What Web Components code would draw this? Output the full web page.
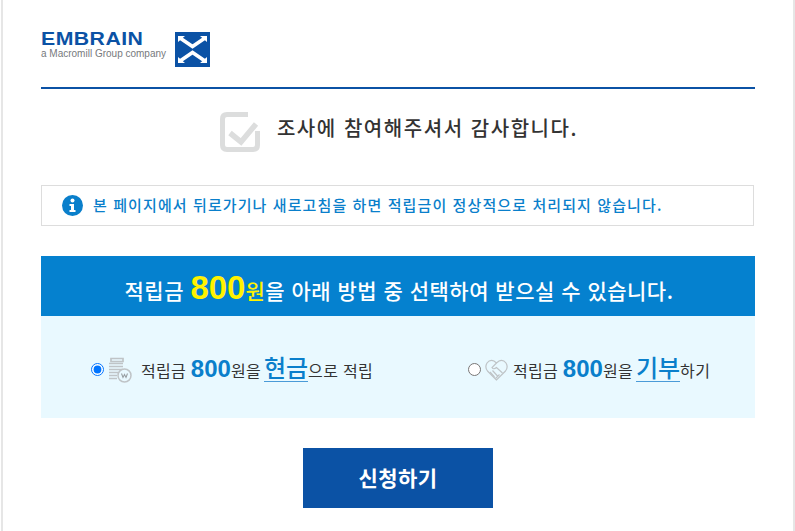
<!DOCTYPE html>
<html lang="ko">
<head>
<meta charset="utf-8">
<title>조사 완료</title>
<style>
html, body { margin: 0; padding: 0; background: #fff; }
body { font-family: "Noto Sans CJK KR", "Liberation Sans", sans-serif; }
</style>
</head>
<body>
<survey-page>
  <brand-header></brand-header>
  <thanks-title>조사에 참여해주셔서 감사합니다.</thanks-title>
  <notice-box>본 페이지에서 뒤로가기나 새로고침을 하면 적립금이 정상적으로 처리되지 않습니다.</notice-box>
  <reward-panel amount="800">
    <reward-option checked icon="cash" word="현금" tail="으로 적립" style="--start:50px;--icon-gap:9px"></reward-option>
    <reward-option icon="heart" word="기부" tail="하기" style="--start:70px;--icon-gap:5px"></reward-option>
  </reward-panel>
  <submit-button>신청하기</submit-button>
</survey-page>

<script>
const FONT = '"Liberation Sans", "Noto Sans CJK KR", sans-serif';

class SurveyPage extends HTMLElement {
  constructor() {
    super();
    this.attachShadow( {mode: 'open'} ).innerHTML = `
      <style>
      :host {
        border-left: 2px solid #e6e6e6;
        border-right: 2px solid #e6e6e6;
        box-sizing: border-box;
        display: block;
        height: 531px;
        margin: 0 0 0 1px;
        overflow: hidden;
        padding: 0 38px;
        width: 794px;
      }
      </style>
      <slot></slot>
    `;
  }
}

class BrandHeader extends HTMLElement {
  constructor() {
    super();
    this.attachShadow( {mode: 'open'} ).innerHTML = `
      <style>
      :host {
        align-items: flex-start;
        border-bottom: 2px solid #0b52a5;
        display: flex;
        gap: 9px;
        height: 55px;
        padding-top: 32px;
      }
      .word { display: flex; flex-direction: column; width: 125px; }
      .name {
        color: #0b52a5;
        font: bold 18px/14px ${FONT};
        letter-spacing: 0.4px;
        transform: scaleX( 1.18 );
        transform-origin: left;
        white-space: nowrap;
      }
      .sub {
        color: #77797c;
        font: 10px/16px ${FONT};
        white-space: nowrap;
      }
      svg { display: block; }
      </style>
      <div class="word"><span class="name">EMBRAIN</span><span class="sub">a Macromill Group company</span></div>
      <svg width="35" height="35" viewBox="0 0 35 35">
        <rect width="35" height="35" fill="#0b52a5"/>
        <path d="M5 6L17.5 14.5L30 6" fill="none" stroke="#fff" stroke-width="3.6"/>
        <path d="M5 29L17.5 20.5L30 29" fill="none" stroke="#fff" stroke-width="3.6"/>
        <path d="M3 4H10L3 10ZM32 4H25L32 10ZM3 31H10L3 25ZM32 31H25L32 25Z" fill="#fff"/>
      </svg>
    `;
  }
}

class ThanksTitle extends HTMLElement {
  constructor() {
    super();
    this.attachShadow( {mode: 'open'} ).innerHTML = `
      <style>
      :host {
        align-items: center;
        color: #333;
        display: flex;
        font-size: 20px;
        font-weight: 500;
        gap: 17px;
        height: 40px;
        justify-content: center;
        letter-spacing: 1.55px;
        margin: 23px 0 33px;
        padding-left: 2px;
      }
      span { padding-bottom: 10px; }
      svg { display: block; }
      </style>
      <svg width="40" height="40" viewBox="0 0 40 40" fill="none" stroke="#dcdddd">
        <path d="M28 2.5H7Q2.5 2.5 2.5 7V33Q2.5 37.5 7 37.5H33Q37.5 37.5 37.5 33V19" stroke-width="5"/>
        <path d="M10 21L21 30L36 12" stroke-width="5.5"/>
      </svg>
      <span><slot></slot></span>
    `;
  }
}

class NoticeBox extends HTMLElement {
  constructor() {
    super();
    this.attachShadow( {mode: 'open'} ).innerHTML = `
      <style>
      :host {
        align-items: center;
        border: 1px solid #ddd;
        box-sizing: border-box;
        color: #0a7fcb;
        display: flex;
        font-size: 15px;
        font-weight: 500;
        gap: 10px;
        height: 41px;
        letter-spacing: 1.1px;
        margin: 0 1px 30px 0;
        padding-left: 20px;
      }
      span { padding-bottom: 3px; white-space: nowrap; }
      svg { display: block; flex: none; }
      </style>
      <svg width="21" height="21" viewBox="0 0 21 21">
        <circle cx="10.5" cy="10.5" r="10.5" fill="#0a7fcb"/>
        <circle cx="10.5" cy="5.5" r="2" fill="#fff"/>
        <path d="M7.5 9H12V15H13.5V17H7.5V15H9V11H7.5Z" fill="#fff"/>
      </svg>
      <span><slot></slot></span>
    `;
  }
}

class RewardPanel extends HTMLElement {
  constructor() {
    super();
    const amount = this.getAttribute( 'amount' );
    this.attachShadow( {mode: 'open'} ).innerHTML = `
      <style>
      :host { display: block; }
      .head {
        align-items: center;
        background: #0581cf;
        box-sizing: border-box;
        color: #fff;
        display: flex;
        font-size: 21px;
        font-weight: 500;
        height: 60px;
        justify-content: center;
        letter-spacing: 0.5px;
        padding: 3px 0 0 2px;
        white-space: nowrap;
      }
      .num { color: #fff200; font: bold 33px/40px ${FONT}; letter-spacing: 0; }
      .unit { color: #fff200; }
      .body {
        background: #e9f9ff;
        display: flex;
        height: 102px;
      }
      </style>
      <div class="head"><span>적립금 <span class="num">${amount}</span><span class="unit">원</span>을 아래 방법 중 선택하여 받으실 수 있습니다.</span></div>
      <div class="body"><slot></slot></div>
    `;
  }
}

class RewardOption extends HTMLElement {
  constructor() {
    super();
    const word = this.getAttribute( 'word' );
    const tail = this.getAttribute( 'tail' );
    const icons = {
      cash: `<svg width="24" height="26" viewBox="0 0 24 26" fill="none" stroke="#bfc4c7">
          <path d="M3 1.5H15V4.5H3ZM1 6.5H15M1 9.5H15M1 12.5H15M1 15.5H11M1 18.5H9M1 21.5H9" stroke-width="1.7"/>
          <circle cx="16.5" cy="18.5" r="6.5" fill="#e9f9ff" stroke-width="1.5"/>
          <path d="M13.5 16.5L15 20.5L16.5 17.5L18 20.5L19.5 16.5" stroke="#9aa1a5" stroke-width="1.1"/>
        </svg>`,
      heart: `<svg width="23" height="22" viewBox="0 0 23 22" fill="none" stroke="#bfc4c7" stroke-width="1.2">
          <path d="M11.5 21L2.5 12Q-0.5 8 2 4Q5 0 9 2L11.5 4L14 2Q18 0 21 4Q23.5 8 20.5 12Z"/>
          <path d="M11.5 4L7 8.5Q8.5 11 11.5 8.5L17.5 14M5 13L9.5 18M7.5 11.5L12.5 17M14.5 15.5L10.5 19.5"/>
        </svg>`
    };
    this.attachShadow( {mode: 'open'} ).innerHTML = `
      <style>
      :host {
        align-items: center;
        box-sizing: border-box;
        color: #333;
        display: flex;
        flex: 0 0 50%;
        font-size: 16px;
        letter-spacing: 0.3px;
        padding: 2px 0 0 var( --start );
      }
      input { accent-color: #0075ff; flex: none; height: 13px; margin: 3px 4px 0 0; width: 13px; }
      svg { display: block; flex: none; margin: 3px var( --icon-gap ) 0 0; }
      .num { color: #0a7fcb; font: bold 24px/30px ${FONT}; letter-spacing: 0; }
      .word {
        border-bottom: 1px solid #4a9bd8;
        color: #0a7fcb;
        font-size: 24px;
        font-weight: 500;
        letter-spacing: 0;
        line-height: 28px;
        margin: 0 0 0 3px;
      }
      .line { align-items: baseline; display: flex; white-space: pre; }
      </style>
      <input type="radio" name="pay" ${this.hasAttribute( 'checked' ) ? 'checked' : ''}>
      ${icons[this.getAttribute( 'icon' )]}
      <div class="line"><span>적립금 </span><span class="num">800</span><span>원을</span><span class="word">${word}</span><span>${tail}</span></div>
    `;
  }
}

class SubmitButton extends HTMLElement {
  constructor() {
    super();
    this.attachShadow( {mode: 'open'} ).innerHTML = `
      <style>
      :host { display: flex; justify-content: center; margin-top: 30px; }
      button {
        background: #0b52a5;
        border: none;
        color: #fff;
        font: 700 21px "Noto Sans CJK KR", sans-serif;
        height: 60px;
        letter-spacing: 0.4px;
        margin: 0;
        padding: 0 0 3px;
        width: 190px;
      }
      </style>
      <button><slot></slot></button>
    `;
  }
}

window.customElements.define( 'survey-page', SurveyPage );
window.customElements.define( 'brand-header', BrandHeader );
window.customElements.define( 'thanks-title', ThanksTitle );
window.customElements.define( 'notice-box', NoticeBox );
window.customElements.define( 'reward-panel', RewardPanel );
window.customElements.define( 'reward-option', RewardOption );
window.customElements.define( 'submit-button', SubmitButton );
</script>
</body>
</html>
